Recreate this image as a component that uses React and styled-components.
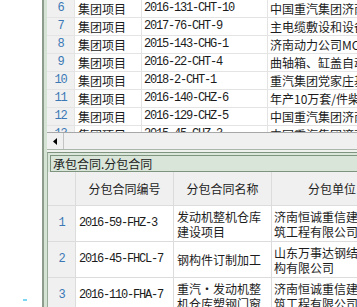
import React from "react";
import styled, { createGlobalStyle } from "styled-components";

const GlobalStyle = createGlobalStyle`
  html, body { margin: 0; padding: 0; background: #ffffff; }
  body { font-family: "Noto Sans CJK SC", "Noto Sans", sans-serif; }
`;

const CJK = `"Noto Sans CJK SC", "Noto Sans", sans-serif`;
const MONO = `"Liberation Mono", "Noto Sans CJK SC", monospace`;

const Screen = styled.div`
  position: relative;
  display: flex;
  width: 357px;
  height: 307px;
  overflow: hidden;
  background: #ffffff;
`;

const LeftBlank = styled.div`
  width: 42px;
  flex: none;
  background: #ffffff;
`;

const Splitter = styled.div`
  width: 3px;
  flex: none;
  border-left: 2px solid #8e9c8e;
  background: #d5e3d5;
`;

const Main = styled.div`
  flex: 1;
  min-width: 0;
  display: flex;
  flex-direction: column;
`;

const UpperGrid = styled.div`
  height: 132px;
  flex: none;
  overflow: hidden;
  display: grid;
  grid-template-columns: 27px 66px 125px 220px;
  grid-auto-rows: 17px;
  gap: 1px;
  background: #e4e4e4;
  align-content: start;
`;

const Cell = styled.div`
  background: ${(p) => (p.$gray ? "#f0f0f0" : "#ffffff")};
  color: ${(p) => (p.$num ? "#3a78b6" : "#1c1c1c")};
  font-family: ${(p) => (p.$mono ? MONO : CJK)};
  font-size: 12px;
  letter-spacing: ${(p) => (p.$mono ? "-1.2px" : "0")};
  line-height: 15px;
  white-space: nowrap;
  overflow: hidden;
  display: flex;
  align-items: center;
  justify-content: ${(p) => (p.$center ? "center" : "flex-start")};
  padding-left: ${(p) => (p.$center ? 0 : p.$pad ?? 3)}px;
`;

const ScrollBar = styled.div`
  height: 16px;
  flex: none;
  display: flex;
  border-top: 1px solid #a7a7a7;
  border-bottom: 1px solid #aab6aa;
  background: #f0f0f0;
`;

const ArrowButton = styled.div`
  width: 16px;
  display: flex;
  align-items: center;
  justify-content: center;
  border-right: 1px solid #c4c4c4;
  background: #f0f0f0;
`;

const Gap = styled.div`
  height: 2px;
  flex: none;
  background: #eef1ee;
`;

const Panel = styled.div`
  flex: 1;
  border-top: 1px solid #7e947e;
  border-left: 1px solid #9aab9a;
  background: #dae6da;
  display: flex;
  flex-direction: column;
`;

const CaptionWrap = styled.div`
  padding: 2px 0 0 2px;
  margin-right: -6px;
`;

const Caption = styled.div`
  height: 15px;
  border: 1px solid #7e947e;
  background: #d9e5d9;
  color: #1c1c1c;
  font-family: ${CJK};
  font-size: 12px;
  line-height: 15px;
  padding-left: 2px;
  white-space: nowrap;
`;

const LowerGrid = styled.div`
  flex: 1;
  display: grid;
  grid-template-columns: 27px 97px 97px 120px;
  grid-template-rows: 33px;
  grid-auto-rows: 35px;
  gap: 1px;
  background: #dcdcdc;
  align-content: start;
  overflow: hidden;
`;

const Lines = styled.div`
  display: flex;
  flex-direction: column;
`;

const Marker = styled.span`
  position: absolute;
  left: 23px;
  top: 299px;
  width: 4px;
  height: 2px;
  background: #7fd6f2;
`;

const upperRows = [
  ["6", "集团项目", "2016-131-CHT-10", "中国重汽集团济南动力"],
  ["7", "集团项目", "2017-76-CHT-9", "主电缆敷设和设备安装"],
  ["8", "集团项目", "2015-143-CHG-1", "济南动力公司MC11"],
  ["9", "集团项目", "2016-22-CHT-4", "曲轴箱、缸盖自动线"],
  ["10", "集团项目", "2018-2-CHT-1", "重汽集团党家庄基地"],
  ["11", "集团项目", "2016-140-CHZ-6", "年产10万套/件柴油机"],
  ["12", "集团项目", "2016-129-CHZ-5", "中国重汽集团济南动力"],
  ["13", "集团项目", "2015-45-CHZ-3", "中国重汽集团济南动力"],
];

const lowerRows = [
  ["1", "2016-59-FHZ-3", ["发动机整机仓库", "建设项目"], ["济南恒诚重信建", "筑工程有限公司"]],
  ["2", "2016-45-FHCL-7", ["钢构件订制加工"], ["山东万事达钢结", "构有限公司"]],
  ["3", "2016-110-FHA-7", ["重汽·发动机整", "机仓库塑钢门窗"], ["济南恒诚重信建", "筑工程有限公司"]],
];

export default function App() {
  return (
    <>
      <GlobalStyle />
      <Screen>
        <LeftBlank />
        <Splitter />
        <Main>
          <UpperGrid>
            {upperRows.map((r) => (
              <React.Fragment key={r[0]}>
                <Cell $gray $num $mono $center>{r[0]}</Cell>
                <Cell>{r[1]}</Cell>
                <Cell $mono $pad={2}>{r[2]}</Cell>
                <Cell $pad={2}>{r[3]}</Cell>
              </React.Fragment>
            ))}
          </UpperGrid>
          <ScrollBar>
            <ArrowButton>
              <svg width="4" height="7" viewBox="0 0 4 7">
                <path d="M4 0 L0 3.5 L4 7 Z" fill="#000" />
              </svg>
            </ArrowButton>
          </ScrollBar>
          <Gap />
          <Panel>
            <CaptionWrap>
              <Caption>承包合同.分包合同</Caption>
            </CaptionWrap>
            <LowerGrid>
              <Cell $gray />
              <Cell $gray $center>分包合同编号</Cell>
              <Cell $gray $center>分包合同名称</Cell>
              <Cell $gray $center>分包单位</Cell>
              {lowerRows.map((r) => (
                <React.Fragment key={r[0]}>
                  <Cell $gray $num $mono $center>{r[0]}</Cell>
                  <Cell $mono>{r[1]}</Cell>
                  <Cell>
                    <Lines>{r[2].map((l) => <span key={l}>{l}</span>)}</Lines>
                  </Cell>
                  <Cell $pad={2}>
                    <Lines>{r[3].map((l) => <span key={l}>{l}</span>)}</Lines>
                  </Cell>
                </React.Fragment>
              ))}
            </LowerGrid>
          </Panel>
        </Main>
        <Marker />
      </Screen>
    </>
  );
}
